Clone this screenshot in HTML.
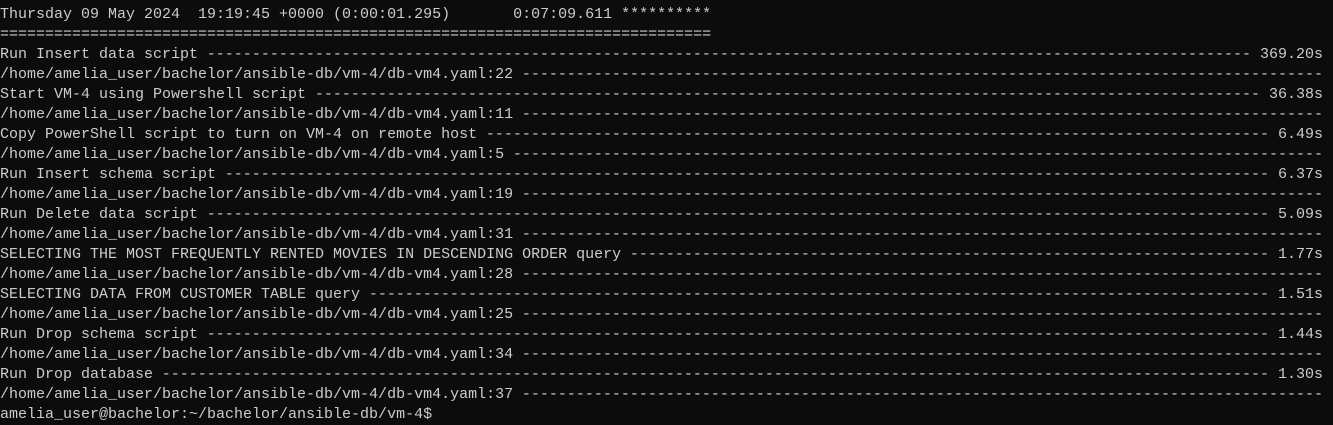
<!DOCTYPE html>
<html><head><meta charset="utf-8"><style>
html,body{margin:0;padding:0;background:#0c0c0c;width:1333px;height:410px;overflow:hidden}
#t{position:absolute;left:0;top:5px;width:1323px;font-family:"Liberation Mono",monospace;font-size:15px;line-height:20px;color:#cccccc}
.l{display:flex;height:20px;white-space:pre}
.f{flex:1;overflow:hidden;direction:rtl;text-align:right}
.f::before{content:"----------------------------------------------------------------------------------------------------------------------------------------------------------"}
</style></head><body><div id="t">
<div class="l">Thursday 09 May 2024  19:19:45 +0000 (0:00:01.295)       0:07:09.611 **********</div>
<div class="l">===============================================================================</div>
<div class="l"><span>Run Insert data script </span><span class="f"></span><span> 369.20s</span></div>
<div class="l"><span>/home/amelia_user/bachelor/ansible-db/vm-4/db-vm4.yaml:22 </span><span class="f"></span></div>
<div class="l"><span>Start VM-4 using Powershell script </span><span class="f"></span><span> 36.38s</span></div>
<div class="l"><span>/home/amelia_user/bachelor/ansible-db/vm-4/db-vm4.yaml:11 </span><span class="f"></span></div>
<div class="l"><span>Copy PowerShell script to turn on VM-4 on remote host </span><span class="f"></span><span> 6.49s</span></div>
<div class="l"><span>/home/amelia_user/bachelor/ansible-db/vm-4/db-vm4.yaml:5 </span><span class="f"></span></div>
<div class="l"><span>Run Insert schema script </span><span class="f"></span><span> 6.37s</span></div>
<div class="l"><span>/home/amelia_user/bachelor/ansible-db/vm-4/db-vm4.yaml:19 </span><span class="f"></span></div>
<div class="l"><span>Run Delete data script </span><span class="f"></span><span> 5.09s</span></div>
<div class="l"><span>/home/amelia_user/bachelor/ansible-db/vm-4/db-vm4.yaml:31 </span><span class="f"></span></div>
<div class="l"><span>SELECTING THE MOST FREQUENTLY RENTED MOVIES IN DESCENDING ORDER query </span><span class="f"></span><span> 1.77s</span></div>
<div class="l"><span>/home/amelia_user/bachelor/ansible-db/vm-4/db-vm4.yaml:28 </span><span class="f"></span></div>
<div class="l"><span>SELECTING DATA FROM CUSTOMER TABLE query </span><span class="f"></span><span> 1.51s</span></div>
<div class="l"><span>/home/amelia_user/bachelor/ansible-db/vm-4/db-vm4.yaml:25 </span><span class="f"></span></div>
<div class="l"><span>Run Drop schema script </span><span class="f"></span><span> 1.44s</span></div>
<div class="l"><span>/home/amelia_user/bachelor/ansible-db/vm-4/db-vm4.yaml:34 </span><span class="f"></span></div>
<div class="l"><span>Run Drop database </span><span class="f"></span><span> 1.30s</span></div>
<div class="l"><span>/home/amelia_user/bachelor/ansible-db/vm-4/db-vm4.yaml:37 </span><span class="f"></span></div>
<div class="l">amelia_user@bachelor:~/bachelor/ansible-db/vm-4$</div>
</div></body></html>
